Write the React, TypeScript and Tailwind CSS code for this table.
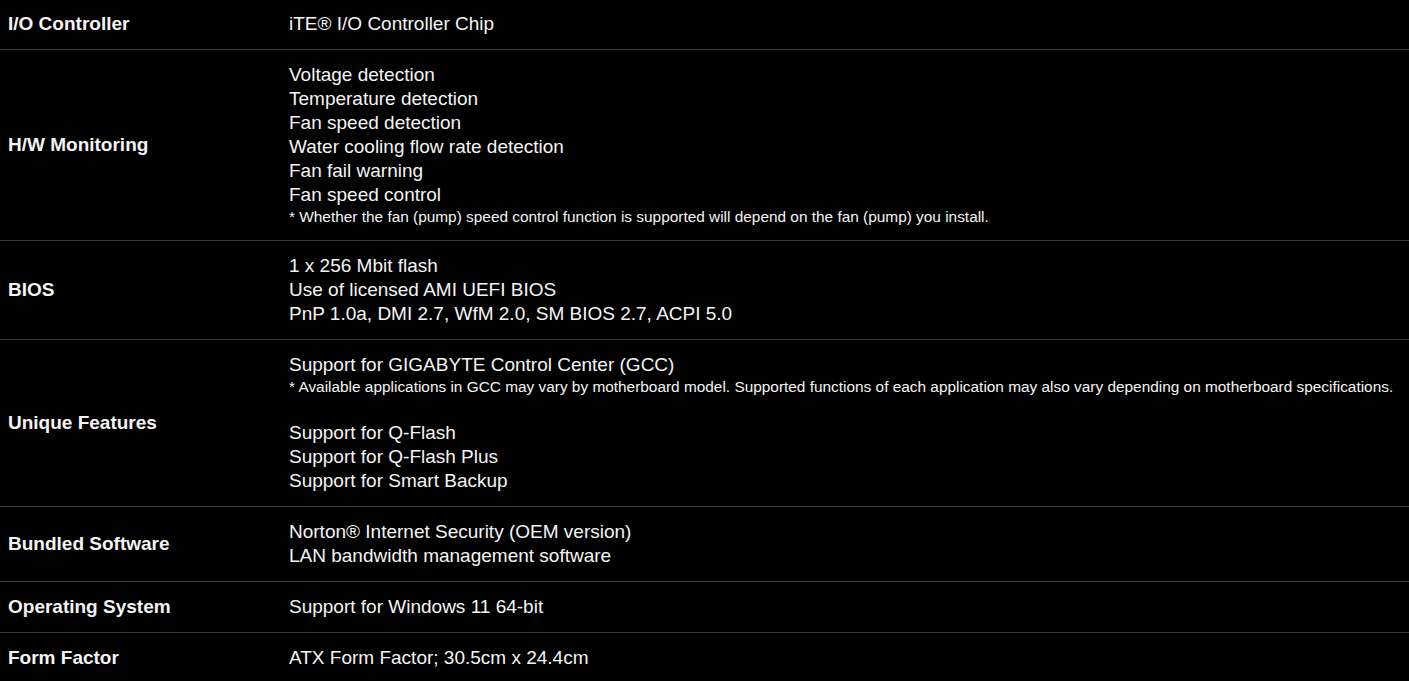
const specs: { label: string; lines: (string | { note: string } | null)[] }[] = [
  { label: 'I/O Controller', lines: ['iTE® I/O Controller Chip'] },
  {
    label: 'H/W Monitoring',
    lines: [
      'Voltage detection',
      'Temperature detection',
      'Fan speed detection',
      'Water cooling flow rate detection',
      'Fan fail warning',
      'Fan speed control',
      { note: '* Whether the fan (pump) speed control function is supported will depend on the fan (pump) you install.' },
    ],
  },
  {
    label: 'BIOS',
    lines: ['1 x 256 Mbit flash', 'Use of licensed AMI UEFI BIOS', 'PnP 1.0a, DMI 2.7, WfM 2.0, SM BIOS 2.7, ACPI 5.0'],
  },
  {
    label: 'Unique Features',
    lines: [
      'Support for GIGABYTE Control Center (GCC)',
      { note: '* Available applications in GCC may vary by motherboard model. Supported functions of each application may also vary depending on motherboard specifications.' },
      null,
      'Support for Q-Flash',
      'Support for Q-Flash Plus',
      'Support for Smart Backup',
    ],
  },
  { label: 'Bundled Software', lines: ['Norton® Internet Security (OEM version)', 'LAN bandwidth management software'] },
  { label: 'Operating System', lines: ['Support for Windows 11 64-bit'] },
  { label: 'Form Factor', lines: ['ATX Form Factor; 30.5cm x 24.4cm'] },
];

export default function App() {
  return (
    <div className="min-h-screen bg-black text-[#f4f4f4] font-['Liberation_Sans',Arial,sans-serif] overflow-hidden">
      <div className="-mt-px">
        {specs.map((row, i) => (
          <div
            key={row.label}
            className={`grid grid-cols-[289px_1fr] items-center pt-[13px] pb-[13px] ${i < specs.length - 1 ? 'border-b border-[#3c3c3c]' : ''}`}
          >
            <div className="pl-2 text-[19px] font-bold leading-6">{row.label}</div>
            <div className="flex flex-col">
              {row.lines.map((line, j) =>
                line === null ? (
                  <div key={j} className="h-6" />
                ) : typeof line === 'string' ? (
                  <div key={j} className="text-[19px] leading-6">{line}</div>
                ) : (
                  <div key={j} className="text-[15.4px] leading-5 whitespace-nowrap">{line.note}</div>
                )
              )}
            </div>
          </div>
        ))}
      </div>
    </div>
  );
}
